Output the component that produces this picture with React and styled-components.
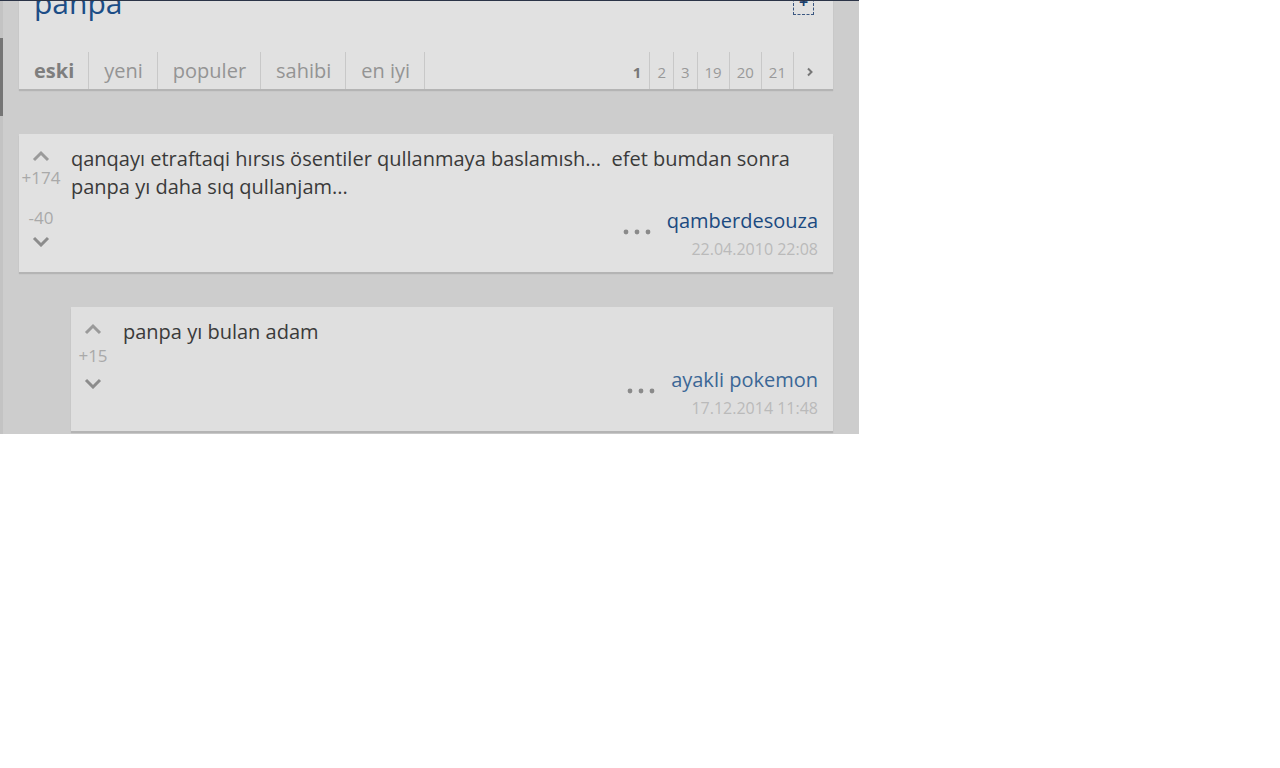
import styled, { createGlobalStyle } from 'styled-components'

const GlobalStyle = createGlobalStyle`
  html, body {
    margin: 0;
    padding: 0;
    background: #fff;
    font-family: 'Open Sans', 'Liberation Sans', sans-serif;
  }
`

const comments = [
  {
    id: 1,
    indent: 0,
    up: '+174',
    down: '-40',
    lines: ['qanqayı etraftaqi hırsıs ösentiler qullanmaya baslamısh...  efet bumdan sonra', 'panpa yı daha sıq qullanjam...'],
    author: 'qamberdesouza',
    date: '22.04.2010 22:08',
    visited: false,
  },
  {
    id: 2,
    indent: 52,
    up: '+15',
    lines: ['panpa yı bulan adam'],
    author: 'ayakli pokemon',
    date: '17.12.2014 11:48',
    visited: true,
  },
]

const Chevron = ({ down }) => (
  <svg width="18" height="12" viewBox="0 0 18 12">
    <polyline
      points={down ? '2,3 9,10 16,3' : '2,10 9,3 16,10'}
      fill="none"
      stroke={down ? '#8c8c8c' : '#9a9a9a'}
      strokeWidth="3"
    />
  </svg>
)

const Dots = () => (
  <DotsSvg width="28" height="6" viewBox="0 0 28 6">
    <circle cx="3" cy="3" r="2.4" fill="#8a8a8a" />
    <circle cx="14" cy="3" r="2.4" fill="#8a8a8a" />
    <circle cx="25" cy="3" r="2.4" fill="#8a8a8a" />
  </DotsSvg>
)

const Comment = ({ c }) => (
  <Entry $indent={c.indent}>
    <VoteCol>
      <Chevron />
      {c.down ? (
        <>
          <Score $mt={6}>{c.up}</Score>
          <Score $mt={20}>{c.down}</Score>
          <DownWrap $mt={7}>
            <Chevron down />
          </DownWrap>
        </>
      ) : (
        <>
          <Score $mt={11}>{c.up}</Score>
          <DownWrap $mt={11}>
            <Chevron down />
          </DownWrap>
        </>
      )}
    </VoteCol>
    <Body>
      <Text>
        {c.lines.map((l) => (
          <div key={l}>{l}</div>
        ))}
      </Text>
      <Footer>
        <AuthorRow>
          <Dots />
          <Author $visited={c.visited}>{c.author}</Author>
        </AuthorRow>
        <Date>{c.date}</Date>
      </Footer>
    </Body>
  </Entry>
)

export default function App() {
  const tabs = ['eski', 'yeni', 'populer', 'sahibi', 'en iyi']
  const pages = ['1', '2', '3', '19', '20', '21']
  return (
    <>
      <GlobalStyle />
      <Viewport>
        <Rail>
          <Thumb />
        </Rail>
        <Content>
          <HeaderCard>
            <TitleRow>
              <Title>panpa</Title>
              <AddBox>+</AddBox>
            </TitleRow>
            <Bar>
              <Tabs>
                {tabs.map((t, i) => (
                  <Tab key={t} $active={i === 0}>
                    {t}
                  </Tab>
                ))}
              </Tabs>
              <Pager>
                {pages.map((p, i) => (
                  <Page key={p} $active={i === 0}>
                    {p}
                  </Page>
                ))}
                <Page $next>
                  <svg width="8" height="10" viewBox="0 0 8 10">
                    <polyline points="2,1.5 5.5,5 2,8.5" fill="none" stroke="#777" strokeWidth="2" />
                  </svg>
                </Page>
              </Pager>
            </Bar>
          </HeaderCard>
          <List>
            {comments.map((c) => (
              <Comment key={c.id} c={c} />
            ))}
          </List>
        </Content>
      </Viewport>
    </>
  )
}

const Viewport = styled.div`
  width: 859px;
  height: 434px;
  overflow: hidden;
  background: #cdcdcd;
  border-top: 1px solid #2b3447;
  box-sizing: border-box;
  display: flex;
`

const Rail = styled.div`
  width: 3px;
  flex-shrink: 0;
  background: #c3c3c3;
`

const Thumb = styled.div`
  margin-top: 37px;
  height: 78px;
  background: #757575;
`

const Content = styled.div`
  flex: 1;
  padding: 0 26px 0 16px;
`

const HeaderCard = styled.div`
  margin-top: -18px;
  background: #e1e1e1;
  box-shadow: 0 2px 1px rgba(0, 0, 0, 0.12);
`

const TitleRow = styled.div`
  display: flex;
  justify-content: space-between;
  align-items: flex-start;
  padding: 0 19px 0 15px;
`

const Title = styled.h1`
  margin: 0;
  font-size: 30px;
  line-height: 40px;
  font-weight: 400;
  color: #1c4d86;
`

const AddBox = styled.div`
  margin-top: 11px;
  width: 19px;
  height: 19px;
  border: 1px dashed #3a5680;
  color: #1c3f6e;
  font-size: 16px;
  font-weight: 700;
  line-height: 15px;
  text-align: center;
`

const Bar = styled.div`
  margin-top: 29px;
  display: flex;
  justify-content: space-between;
  height: 37px;
`

const Tabs = styled.div`
  display: flex;
`

const Tab = styled.div`
  padding: 0 14px 0 15px;
  border-right: 1px solid #c8c8c8;
  font-size: 20px;
  line-height: 37px;
  color: ${(p) => (p.$active ? '#7e7e7e' : '#949494')};
  font-weight: ${(p) => (p.$active ? 700 : 400)};
`

const Pager = styled.div`
  display: flex;
  padding-right: 7px;
`

const Page = styled.div`
  display: flex;
  align-items: center;
  padding: ${(p) => (p.$next ? '3px 12px 0' : p.$active ? '3px 8px 0' : '3px 7px 0')};
  border-left: ${(p) => (p.$active ? 'none' : '1px solid #c8c8c8')};
  font-size: 15px;
  color: ${(p) => (p.$active ? '#777' : '#999')};
  font-weight: ${(p) => (p.$active ? 700 : 400)};
`

const List = styled.div`
  margin-top: 45px;
  display: flex;
  flex-direction: column;
  gap: 35px;
`

const Entry = styled.div`
  margin-left: ${(p) => p.$indent}px;
  display: flex;
  gap: 8px;
  background: ${(p) => (p.$indent ? '#dfdfdf' : '#e1e1e1')};
  box-shadow: 0 2px 1px rgba(0, 0, 0, 0.12);
  padding-bottom: 9px;
`

const VoteCol = styled.div`
  width: 44px;
  flex-shrink: 0;
  padding-top: 16px;
  display: flex;
  flex-direction: column;
  align-items: center;
  svg {
    display: block;
  }
`

const Score = styled.div`
  margin-top: ${(p) => p.$mt}px;
  font-size: 17px;
  line-height: 20px;
  color: #a9a9a9;
`

const DownWrap = styled.div`
  margin-top: ${(p) => p.$mt}px;
`

const Body = styled.div`
  flex: 1;
  padding: 11px 15px 0 0;
`

const Text = styled.div`
  min-height: 42px;
  margin-bottom: 6px;
  font-size: 20px;
  line-height: 28px;
  color: #3a3a3a;
  white-space: pre-wrap;
`

const Footer = styled.div`
  display: flex;
  flex-direction: column;
  align-items: flex-end;
`

const AuthorRow = styled.div`
  display: flex;
  gap: 16px;
  height: 28px;
`

const DotsSvg = styled.svg`
  align-self: flex-end;
`

const Author = styled.span`
  font-size: 20px;
  line-height: 28px;
  color: ${(p) => (p.$visited ? '#3b6796' : '#1b4a80')};
`

const Date = styled.div`
  font-size: 16px;
  line-height: 28px;
  color: #bababa;
`
